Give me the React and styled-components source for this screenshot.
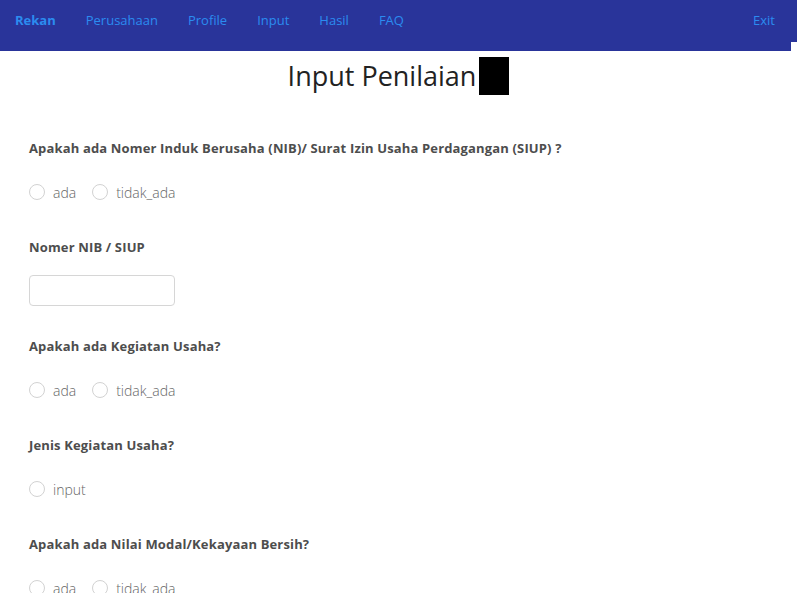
import React from "react";
import styled, { createGlobalStyle } from "styled-components";

const GlobalStyle = createGlobalStyle`
  body {
    margin: 0;
    background: #fff;
    font-family: "Open Sans", "Noto Sans", sans-serif;
    overflow: hidden;
  }
`;

const NavBar = styled.nav`
  position: relative;
  display: flex;
  align-items: flex-start;
  gap: 30px;
  height: 51px;
  background: #29349a;
  padding: 0 22px 0 15px;

  &::after {
    content: "";
    position: absolute;
    right: 0;
    bottom: 0;
    width: 6px;
    height: 9px;
    background: #fff;
  }
`;

const NavLink = styled.a`
  display: block;
  line-height: 40px;
  font-size: 13px;
  font-weight: ${(p) => (p.$brand ? 700 : 400)};
  color: #2b8cf0;
  text-decoration: none;
  cursor: pointer;
`;

const Spacer = styled.div`
  flex: 1;
`;

const Title = styled.h1`
  display: flex;
  justify-content: center;
  align-items: center;
  gap: 3px;
  margin: 6px 0 0;
  font-size: 27px;
  font-weight: 400;
  line-height: 38px;
  color: #222;
`;

const BlackBox = styled.span`
  display: inline-block;
  width: 30px;
  height: 38px;
  background: #000;
`;

const Form = styled.form`
  display: flex;
  flex-direction: column;
  padding: 43px 29px 0;
`;

const Field = styled.div`
  display: flex;
  flex-direction: column;
  margin-bottom: ${(p) => p.$gap || "35px"};
`;

const Question = styled.label`
  font-size: 13px;
  font-weight: 700;
  letter-spacing: 0.15px;
  line-height: 20px;
  color: #4d4d4d;
  margin-bottom: ${(p) => p.$gap || "24px"};
`;

const RadioRow = styled.div`
  display: flex;
  align-items: center;
  gap: 16px;
  height: 20px;
`;

const Option = styled.label`
  display: flex;
  align-items: center;
  gap: 8px;
  font-size: 14px;
  font-weight: 300;
  color: #666;
  cursor: pointer;
`;

const Circle = styled.span`
  display: inline-block;
  width: 14px;
  height: 14px;
  border: 1px solid #d2d2d2;
  border-radius: 50%;
  background: #fff;
`;

const TextInput = styled.input`
  box-sizing: border-box;
  width: 146px;
  height: 31px;
  border: 1px solid #d6d6d6;
  border-radius: 4px;
  padding: 0 8px;
  font-size: 13px;
  outline: none;
`;

const Radios = ({ options }) => (
  <RadioRow>
    {options.map((o) => (
      <Option key={o}>
        <Circle />
        {o}
      </Option>
    ))}
  </RadioRow>
);

export default function App() {
  return (
    <>
      <GlobalStyle />
      <NavBar>
        <NavLink $brand>Rekan</NavLink>
        <NavLink>Perusahaan</NavLink>
        <NavLink>Profile</NavLink>
        <NavLink>Input</NavLink>
        <NavLink>Hasil</NavLink>
        <NavLink>FAQ</NavLink>
        <Spacer />
        <NavLink>Exit</NavLink>
      </NavBar>
      <Title>
        Input Penilaian
        <BlackBox />
      </Title>
      <Form>
        <Field>
          <Question>
            Apakah ada Nomer Induk Berusaha (NIB)/ Surat Izin Usaha Perdagangan (SIUP) ?
          </Question>
          <Radios options={["ada", "tidak_ada"]} />
        </Field>
        <Field $gap="30px">
          <Question $gap="18px">Nomer NIB / SIUP</Question>
          <TextInput type="text" />
        </Field>
        <Field>
          <Question>Apakah ada Kegiatan Usaha?</Question>
          <Radios options={["ada", "tidak_ada"]} />
        </Field>
        <Field>
          <Question>Jenis Kegiatan Usaha?</Question>
          <Radios options={["input"]} />
        </Field>
        <Field>
          <Question>Apakah ada Nilai Modal/Kekayaan Bersih?</Question>
          <Radios options={["ada", "tidak_ada"]} />
        </Field>
      </Form>
    </>
  );
}
